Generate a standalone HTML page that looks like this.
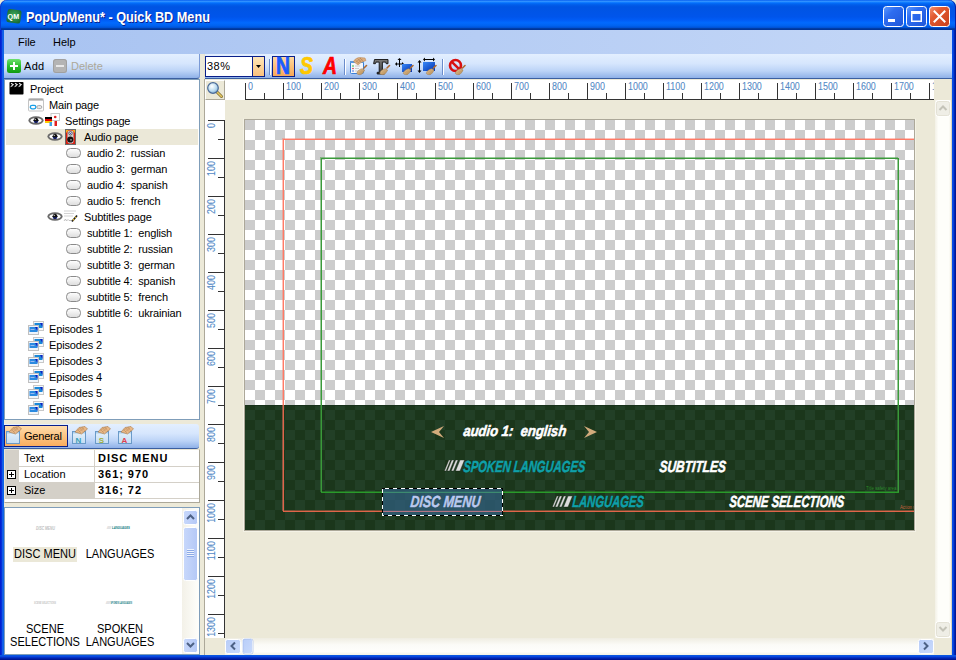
<!DOCTYPE html>
<html><head><meta charset="utf-8">
<style>
*{margin:0;padding:0;box-sizing:border-box}
html,body{width:956px;height:660px;overflow:hidden;background:#ece9d8}
body{position:relative;-webkit-font-smoothing:antialiased;font-family:"Liberation Sans",sans-serif;font-size:11px;color:#000}
.a{position:absolute}
.t{position:absolute;white-space:pre;line-height:16px}
.tr{letter-spacing:-0.15px}
.th{font-size:12px;width:100px;margin-left:-50px;text-align:center;transform:scaleX(0.92);transform-origin:50% 0}
.mi{font-weight:bold;font-style:italic;transform-origin:0 12px;-webkit-text-stroke:0.6px currentColor;text-shadow:0 0 1px rgba(0,10,0,0.9)}
/* window frame */
#title{left:0;top:0;width:956px;height:30px;border-radius:7px 7px 0 0;box-shadow:inset 1px 0 0 #0a3ad0,inset -1px 0 0 #0020a8;
background:linear-gradient(to bottom,#0058ee 0%,#3593ff 4%,#288eff 6%,#127dff 8%,#036ffc 10%,#0262ee 14%,#0057e5 20%,#0054e3 24%,#0055eb 56%,#005bf5 66%,#026afe 76%,#0062ef 86%,#0052d6 92%,#0040ab 94%,#003092 100%)}
#lb{left:0;top:30px;width:4px;height:630px;background:linear-gradient(to right,#0019cf,#0831d9 40%,#166aee 70%,#0a5fe0)}
#rb{left:952px;top:30px;width:4px;height:630px;background:linear-gradient(to right,#0050ee,#0a48e0 30%,#0028b8 60%,#001088)}
#bb{left:0;top:655px;width:956px;height:5px;background:linear-gradient(to bottom,#0a5fe0,#0a48e0 30%,#0028b8 60%,#001088)}
#menu{left:4px;top:30px;width:948px;height:24px;background:linear-gradient(to right,#a8c3f1,#c4d7f7)}
.tb{background:linear-gradient(to bottom,#e3efff 0%,#d6e6fd 40%,#bcd4f7 70%,#8fb1e8 100%);border-bottom:1px solid #3b5fa0}
</style></head><body>
<div id="title" class="a"></div>
<div id="lb" class="a"></div>
<div id="rb" class="a"></div>
<div id="bb" class="a"></div>
<div id="menu" class="a"></div>
<div class="t" style="left:18px;top:34px">File</div>
<div class="t" style="left:53px;top:34px">Help</div>
<!-- title text -->
<div class="t" style="left:26px;top:9px;font-size:14px;font-weight:bold;color:#fff;text-shadow:1px 1px 0 #0a1f8e;transform:scaleX(0.906);transform-origin:0 0">PopUpMenu* - Quick BD Menu</div>


<!-- title buttons -->
<svg class="a" style="left:883px;top:6px" width="67" height="21">
<defs>
<linearGradient id="bb1" x1="0" y1="0" x2="1" y2="1"><stop offset="0" stop-color="#5d9bff"/><stop offset="0.35" stop-color="#2e6df0"/><stop offset="1" stop-color="#1f56d8"/></linearGradient>
<linearGradient id="rb1" x1="0" y1="0" x2="1" y2="1"><stop offset="0" stop-color="#f59373"/><stop offset="0.35" stop-color="#e25a30"/><stop offset="1" stop-color="#c9401c"/></linearGradient>
</defs>
<rect x="0.5" y="0.5" width="20" height="20" rx="3" fill="url(#bb1)" stroke="#fff"/>
<rect x="5" y="13" width="7" height="3" fill="#fff"/>
<rect x="23.5" y="0.5" width="20" height="20" rx="3" fill="url(#bb1)" stroke="#fff"/>
<path d="M28 5h11v11h-11z M29.5 8v6.5h8v-6.5z" fill="#fff" fill-rule="evenodd"/>
<rect x="46.5" y="0.5" width="20" height="20" rx="3" fill="url(#rb1)" stroke="#fff"/>
<path d="M51.5 5.5 L61.5 15.5 M61.5 5.5 L51.5 15.5" stroke="#fff" stroke-width="2" stroke-linecap="square"/>
</svg>
<!-- QM icon -->
<svg class="a" style="left:5px;top:8px" width="18" height="17">
<defs><radialGradient id="qmg" cx="0.5" cy="0.45" r="0.6"><stop offset="0" stop-color="#3fae5e"/><stop offset="1" stop-color="#1a6b34"/></radialGradient></defs>
<rect x="2" y="1.5" width="14" height="13.5" rx="2.5" fill="url(#qmg)" transform="rotate(8 9 8)"/>
<text x="2.6" y="11.2" font-family="Liberation Sans" font-weight="bold" font-size="7.2" fill="#fff">QM</text>
</svg>
<!-- left toolbar -->
<div class="a tb" style="left:4px;top:54px;width:196px;height:25px;border-right:1px solid #7a9ad6;border-radius:0 0 3px 0"></div>
<!-- right toolbar -->
<div class="a tb" style="left:204px;top:54px;width:748px;height:25px"></div>


<!-- left toolbar content -->
<svg class="a" style="left:7px;top:59px" width="14" height="14">
<defs><linearGradient id="gpl" x1="0" y1="0" x2="0" y2="1"><stop offset="0" stop-color="#6fe06f"/><stop offset="0.5" stop-color="#2cbf2c"/><stop offset="1" stop-color="#129a12"/></linearGradient></defs>
<rect x="0" y="0" width="14" height="14" rx="2.5" fill="url(#gpl)"/>
<path d="M6 3h2v3h3v2h-3v3h-2v-3h-3v-2h3z" fill="#fff"/>
</svg>
<div class="t" style="left:24px;top:58px;letter-spacing:0.3px">Add</div>
<svg class="a" style="left:53px;top:59px" width="14" height="14">
<rect x="0" y="0" width="14" height="14" rx="2.5" fill="#b4b4b4"/>
<rect x="0.5" y="0.5" width="13" height="13" rx="2.5" fill="none" stroke="#a0a0a0"/>
<rect x="3" y="6" width="8" height="2" fill="#e8e8e8"/>
</svg>
<div class="t" style="left:71px;top:58px;color:#aca899">Delete</div>

<!-- right toolbar content -->
<div class="a" style="left:204px;top:54px;width:1px;height:25px;background:#e8e4d0"></div>
<div class="a" style="left:205px;top:56px;width:60px;height:21px;border:1px solid #0a1f8a;background:#fff"></div>
<div class="a" style="left:252px;top:57px;width:12px;height:19px;border-left:1px solid #0a1f8a;background:linear-gradient(#fee6b8,#fbc27e)"></div>
<svg class="a" style="left:256px;top:65px" width="6" height="4"><path d="M0 0h5l-2.5 3z" fill="#000"/></svg>
<div class="t" style="left:207px;top:58px;letter-spacing:0.5px">38%</div>
<div class="a" style="left:269px;top:59px;width:1px;height:16px;background:#6a8ccb;box-shadow:1px 0 0 #fff"></div>
<div class="a" style="left:272px;top:56px;width:23px;height:21px;border:1px solid #0a1f8a;background:linear-gradient(#ffd9a0,#f8a855)"></div>
<div class="t" style="left:276px;top:55px;font-size:22px;line-height:22px;font-weight:bold;color:#1a5cff;transform:scale(0.88,1.06);transform-origin:0 0;-webkit-text-stroke:0.7px #1a5cff">N</div>
<div class="t" style="left:300px;top:55px;font-size:22px;line-height:22px;font-weight:bold;font-style:italic;color:#ffc800;transform:scale(0.88,1.06);transform-origin:0 0;-webkit-text-stroke:0.7px #ffc800">S</div>
<div class="t" style="left:323px;top:55px;font-size:22px;line-height:22px;font-weight:bold;font-style:italic;color:#ff0000;transform:scale(0.88,1.06);transform-origin:0 0;-webkit-text-stroke:0.7px #ff0000">A</div>
<div class="a" style="left:344px;top:59px;width:1px;height:16px;background:#6a8ccb;box-shadow:1px 0 0 #fff"></div>
<div class="a" style="left:442px;top:59px;width:1px;height:16px;background:#6a8ccb;box-shadow:1px 0 0 #fff"></div>
<svg class="a" style="left:348px;top:56px" width="120" height="20">
<defs>
<linearGradient id="brush" x1="0" y1="0" x2="1" y2="1"><stop offset="0" stop-color="#e8c89a"/><stop offset="1" stop-color="#b08850"/></linearGradient>
<g id="br"><path d="M7.5 1.5 L10 -1" stroke="#b06a30" stroke-width="1.6" stroke-linecap="round"/><path d="M5.5 2.5 l2.5 1 l-0.5 1z" fill="#9aa0a8"/><path d="M5.8 2.2 C3.5 2.5 0.5 4.5 0.3 7 C1.5 8.5 4 8.3 5 7.8 C6.5 6.5 7.8 4.5 8 3.5 z" fill="url(#brush)" stroke="#a07848" stroke-width="0.5"/><path d="M2 6.5l3-2.5 M3 7.5l3-3" stroke="#c89860" stroke-width="0.4"/></g>
</defs>
<!-- properties icon -->
<rect x="2.5" y="5.5" width="13" height="12" rx="1" fill="#f4f6fa" stroke="#3a80d8"/>
<rect x="2" y="5" width="14" height="2" fill="#5a9ae0"/>
<circle cx="5" cy="10" r="0.8" fill="#20b020"/><circle cx="5" cy="12.5" r="0.8" fill="#d03040"/><circle cx="5" cy="15" r="0.8" fill="#3060e0"/>
<path d="M7 10h5 M7 12.5h4 M7 15h4" stroke="#c0c0c0" stroke-width="0.8"/>
<path d="M5.5 5.5 C7 3 9 1.5 12 1.5 L17 2 L18 4.5 L13 6.5 L10 9 z" fill="#dcae80" stroke="#b88550" stroke-width="0.5"/>
<path d="M8 6l5-4 M9.5 7.5l5-4.5 M7 3.5l4 4 M9.5 2.5l3.5 3.5 M12 2l3 3" stroke="#a8784a" stroke-width="0.45"/>
<use href="#br" x="8.5" y="10.5"/>
<!-- T icon -->
<defs><linearGradient id="tg" x1="0" y1="0" x2="0" y2="1"><stop offset="0" stop-color="#7a7a7a"/><stop offset="1" stop-color="#3a3a3a"/></linearGradient></defs><path d="M26.5 3.5h13.5v4.2h-1.8l-0.6-1.6h-3.2v10.2h2v1.7h-7.2v-1.7h2v-10.2h-3.2l-0.6 1.6h-1.8z" fill="url(#tg)" stroke="#111" stroke-width="0.9" stroke-linejoin="round"/>
<use href="#br" x="31.5" y="10.5"/>
<!-- move icon -->
<path d="M48 8h7 M51.5 3v8" stroke="#000" stroke-width="1"/>
<path d="M47 8l2-2v4z M56 8l-2-2v4z M51.5 2l-2 2h4z" fill="#000"/>
<defs><linearGradient id="bq" x1="0" y1="0" x2="1" y2="1"><stop offset="0" stop-color="#3a8af8"/><stop offset="1" stop-color="#0030b0"/></linearGradient></defs><rect x="54" y="8" width="10" height="8" fill="url(#bq)"/>
<use href="#br" x="55" y="10.5"/>
<!-- size icon -->
<path d="M71.5 6v9 M76 3.5h10" stroke="#000" stroke-width="1"/>
<path d="M71.5 4l-2 2.5h4z M71.5 17l-2-2.5h4z M75 3.5l2-2v4z M87 3.5l-2-2v4z" fill="#000"/>
<rect x="75" y="6" width="12" height="9" fill="url(#bq)"/>
<use href="#br" x="78" y="10.5"/>
<!-- no icon -->
<circle cx="107.5" cy="9.5" r="5.5" fill="none" stroke="#d81010" stroke-width="2.6"/>
<path d="M103.8 5.8 l7.4 7.4" stroke="#d81010" stroke-width="2.4"/>
<use href="#br" x="107" y="10.5"/>
</svg>
<!-- tree -->
<div class="a" style="left:4px;top:79px;width:196px;height:341px;background:#fff;border:1px solid #7f9db9"></div>

<!-- tree content -->
<div class="a" style="left:6px;top:129px;width:192px;height:16px;background:#ebe8d8"></div>
<svg width="0" height="0" style="position:absolute"><defs>
<linearGradient id="btng" x1="0" y1="0" x2="0" y2="1"><stop offset="0" stop-color="#fff"/><stop offset="1" stop-color="#dcdcdc"/></linearGradient>
<g id="eye"><ellipse cx="8" cy="4.5" rx="7.6" ry="4.2" fill="#6a6a6a"/><ellipse cx="8" cy="4.5" rx="5.6" ry="2.6" fill="#fff"/><path d="M5.3 4.5 L8 1.5 L10.7 4.5 L8 7.3z" fill="#111"/><circle cx="8" cy="4.5" r="2.4" fill="#111"/><circle cx="6.9" cy="6" r="0.7" fill="#1830d0"/><circle cx="9.1" cy="6" r="0.7" fill="#1830d0"/><circle cx="7.2" cy="3.3" r="0.6" fill="#fff"/></g>
<g id="btni"><rect x="0.5" y="0.5" width="14" height="9" rx="4" fill="url(#btng)" stroke="#8a8a8a"/></g>
<g id="epi"><rect x="5.5" y="0.5" width="10" height="9" fill="#f4f8fc" stroke="#c8c8c8"/><rect x="6.5" y="2" width="8" height="5" fill="#1a88d8"/><path d="M12 2h2.5v4z" fill="#1020c0"/><rect x="0.5" y="4.5" width="10" height="9" fill="#eef4fa" stroke="#c0c0c0"/><rect x="1.5" y="6" width="8" height="5" fill="#2a8ae0"/><path d="M7 6h2.5v4z" fill="#1020c0"/><rect x="2.5" y="8" width="4" height="1" fill="#9ab8f0"/></g>
</defs></svg>
<div class="t tr" style="left:30px;top:81px">Project</div>
<svg class="a" style="left:9px;top:82px" width="16" height="13"><rect x="0.5" y="0" width="14" height="12.5" rx="0.8" fill="#000"/><path d="M2 1.2l2.2 1.3l-1.6 1.3 M6 1.2l2.2 1.3l-1.6 1.3 M10 1.2l2.2 1.3l-1.6 1.3" stroke="#fff" stroke-width="1.1" fill="none" opacity="0.9"/><path d="M1.5 4.7l2-0.8 M5.5 4.7l2-0.8 M9.5 4.7l2-0.8" stroke="#fff" stroke-width="1" opacity="0.8"/></svg>
<div class="t tr" style="left:49px;top:97px">Main page</div>
<svg class="a" style="left:28px;top:98px" width="16" height="14"><rect x="0.5" y="0.5" width="15" height="12.5" rx="1" fill="#fdfdfd" stroke="#c4c4c4"/><rect x="1" y="1" width="14" height="1.6" fill="#a8a8a8"/><rect x="2.3" y="7.3" width="5.6" height="3.6" rx="1.8" fill="#fff" stroke="#18a0e8" stroke-width="1.3"/><rect x="8.8" y="7.6" width="5" height="3" rx="1.5" fill="#e8e8e8" stroke="#a8a8a8" stroke-width="1"/></svg>
<div class="t tr" style="left:65px;top:113px">Settings page</div>
<svg class="a" style="left:28px;top:116px" width="16" height="10"><use href="#eye"/></svg>
<svg class="a" style="left:44px;top:112px" width="17" height="15"><rect x="7" y="1.5" width="8.5" height="7" fill="#fff" stroke="#c8c8c8"/><circle cx="11.2" cy="5" r="1.3" fill="#e02020"/><rect x="1" y="5" width="7" height="2" fill="#000"/><rect x="1" y="7" width="7" height="2" fill="#e00000"/><rect x="1" y="9" width="7" height="2" fill="#ffcc00"/><rect x="5.5" y="10" width="2.5" height="4" fill="#40a0e0"/><rect x="8" y="10" width="2.5" height="4" fill="#fff"/><rect x="10.5" y="9" width="2.5" height="5" fill="#e02020"/></svg>
<div class="t tr" style="left:84px;top:129px">Audio page</div>
<svg class="a" style="left:47px;top:132px" width="16" height="10"><use href="#eye"/></svg>
<svg class="a" style="left:65px;top:129px" width="11" height="16"><rect x="0.5" y="0.5" width="10" height="15" fill="#d82010" stroke="#6a6a6a"/><path d="M1 1h3l-3 3z M10 1h-3l3 3z" fill="#f0b020"/><rect x="2.5" y="1.5" width="6" height="13" rx="2.5" fill="#d0d0d0"/><circle cx="5.5" cy="4.3" r="1.7" fill="#f0f0f8" stroke="#222" stroke-width="0.7"/><circle cx="5.5" cy="4.3" r="0.6" fill="#2030c0"/><circle cx="5.3" cy="10.5" r="3.1" fill="#111"/><circle cx="6" cy="10.8" r="0.9" fill="#999"/></svg>
<div class="t tr" style="left:87px;top:145px">audio 2:  russian</div>
<svg class="a" style="left:66px;top:148px" width="16" height="11"><use href="#btni"/></svg>
<div class="t tr" style="left:87px;top:161px">audio 3:  german</div>
<svg class="a" style="left:66px;top:164px" width="16" height="11"><use href="#btni"/></svg>
<div class="t tr" style="left:87px;top:177px">audio 4:  spanish</div>
<svg class="a" style="left:66px;top:180px" width="16" height="11"><use href="#btni"/></svg>
<div class="t tr" style="left:87px;top:193px">audio 5:  french</div>
<svg class="a" style="left:66px;top:196px" width="16" height="11"><use href="#btni"/></svg>
<div class="t tr" style="left:84px;top:209px">Subtitles page</div>
<svg class="a" style="left:47px;top:212px" width="16" height="10"><use href="#eye"/></svg>
<svg class="a" style="left:63px;top:209px" width="16" height="16"><path d="M1 2h12 M1 4.5h10 M1 7h9" stroke="#c8c8c8" stroke-width="0.8"/><path d="M1 12l1.5-2l1 2l1.5-1.5l1 1h3" stroke="#aaa" stroke-width="0.7" fill="none"/><path d="M9 12.5l5-6" stroke="#222" stroke-width="1.8"/><path d="M10 11.3l1-1.2 M12 8.9l0.8-1" stroke="#f0c020" stroke-width="1.2"/></svg>
<div class="t tr" style="left:87px;top:225px">subtitle 1:  english</div>
<svg class="a" style="left:66px;top:228px" width="16" height="11"><use href="#btni"/></svg>
<div class="t tr" style="left:87px;top:241px">subtitle 2:  russian</div>
<svg class="a" style="left:66px;top:244px" width="16" height="11"><use href="#btni"/></svg>
<div class="t tr" style="left:87px;top:257px">subtitle 3:  german</div>
<svg class="a" style="left:66px;top:260px" width="16" height="11"><use href="#btni"/></svg>
<div class="t tr" style="left:87px;top:273px">subtitle 4:  spanish</div>
<svg class="a" style="left:66px;top:276px" width="16" height="11"><use href="#btni"/></svg>
<div class="t tr" style="left:87px;top:289px">subtitle 5:  french</div>
<svg class="a" style="left:66px;top:292px" width="16" height="11"><use href="#btni"/></svg>
<div class="t tr" style="left:87px;top:305px">subtitle 6:  ukrainian</div>
<svg class="a" style="left:66px;top:308px" width="16" height="11"><use href="#btni"/></svg>
<div class="t tr" style="left:49px;top:321px">Episodes 1</div>
<svg class="a" style="left:28px;top:321px" width="17" height="15"><use href="#epi"/></svg>
<div class="t tr" style="left:49px;top:337px">Episodes 2</div>
<svg class="a" style="left:28px;top:337px" width="17" height="15"><use href="#epi"/></svg>
<div class="t tr" style="left:49px;top:353px">Episodes 3</div>
<svg class="a" style="left:28px;top:353px" width="17" height="15"><use href="#epi"/></svg>
<div class="t tr" style="left:49px;top:369px">Episodes 4</div>
<svg class="a" style="left:28px;top:369px" width="17" height="15"><use href="#epi"/></svg>
<div class="t tr" style="left:49px;top:385px">Episodes 5</div>
<svg class="a" style="left:28px;top:385px" width="17" height="15"><use href="#epi"/></svg>
<div class="t tr" style="left:49px;top:401px">Episodes 6</div>
<svg class="a" style="left:28px;top:401px" width="17" height="15"><use href="#epi"/></svg>
<!-- tab bar -->
<div class="a tb" style="left:4px;top:424px;width:195px;height:25px;border-radius:0 3px 3px 0"></div>
<div class="a" style="left:4px;top:425px;width:64px;height:22px;border:1px solid #0a1f8a;background:linear-gradient(#ffdcaa,#f9ad5e)"></div>
<svg class="a" style="left:5px;top:426px" width="135" height="20">
<defs><linearGradient id="tabg" x1="0" y1="0" x2="0" y2="1"><stop offset="0" stop-color="#e6f2fc"/><stop offset="1" stop-color="#c4dcf2"/></linearGradient><g id="tabi"><rect x="1.5" y="5.5" width="13" height="12" fill="url(#tabg)" stroke="#6a9ac8"/><rect x="2" y="6" width="12" height="1.5" fill="#a8cdee"/><path d="M4 6 l4 -4.5 l6 -1 l2.5 2.5 l-6 5 z" fill="#e8b888" stroke="#a87848" stroke-width="0.6"/><path d="M7 4l3 3 M9 2.5l3 3 M11 1.8l3 3 M8 6l5-4 M6 4.5l6-3.5" stroke="#b88858" stroke-width="0.5"/></g></defs>
<use href="#tabi"/>
<use href="#tabi" x="66"/><text x="70.5" y="16.5" font-family="Liberation Sans" font-size="8" font-weight="bold" fill="#3aa0b8">N</text>
<use href="#tabi" x="89"/><text x="93.8" y="16.5" font-family="Liberation Sans" font-size="8" font-weight="bold" fill="#a0b040">S</text>
<use href="#tabi" x="112"/><text x="116.5" y="16.5" font-family="Liberation Sans" font-size="8" font-weight="bold" fill="#e04050">A</text>
</svg>
<div class="t" style="left:24px;top:428px;letter-spacing:-0.2px">General</div>

<!-- property grid -->
<div class="a" style="left:4px;top:449px;width:196px;height:54px;background:#fff;border:1px solid #aca899;border-top-color:#e8e4d4;border-left-color:#e8e4d4"></div>
<div class="a" style="left:5px;top:450px;width:14px;height:49px;background:#d4d0c8"></div>
<div class="a" style="left:19px;top:483px;width:75px;height:15px;background:#d4d0c8"></div>
<div class="a" style="left:19px;top:466px;width:180px;height:1px;background:#d4d0c8"></div>
<div class="a" style="left:19px;top:482px;width:180px;height:1px;background:#d4d0c8"></div>
<div class="a" style="left:5px;top:498px;width:194px;height:1px;background:#d4d0c8"></div>
<div class="a" style="left:94px;top:450px;width:1px;height:48px;background:#d4d0c8"></div>
<svg class="a" style="left:7px;top:470px" width="10" height="26" shape-rendering="crispEdges"><rect x="0.5" y="0.5" width="8" height="8" fill="#fff" stroke="#000"/><path d="M2 4.5h5 M4.5 2v5" stroke="#000"/><rect x="0.5" y="16.5" width="8" height="8" fill="#fff" stroke="#000"/><path d="M2 20.5h5 M4.5 18v5" stroke="#000"/></svg>
<div class="t" style="left:24px;top:450px">Text</div>
<div class="t" style="left:24px;top:466px">Location</div>
<div class="t" style="left:24px;top:482px">Size</div>
<div class="t" style="left:98px;top:450px;font-weight:bold;letter-spacing:0.95px">DISC MENU</div>
<div class="t" style="left:98px;top:466px;font-weight:bold;letter-spacing:0.95px">361; 970</div>
<div class="t" style="left:98px;top:482px;font-weight:bold;letter-spacing:0.95px">316; 72</div>

<!-- thumbnails -->
<div class="a" style="left:4px;top:507px;width:196px;height:148px;background:#fff;border:1px solid #7f9db9"></div>
<div class="a" style="left:182px;top:508px;width:17px;height:146px;background:linear-gradient(to right,#f3f1e8,#fefefb)"></div>
<svg class="a" style="left:182px;top:509px" width="17" height="145">
<defs><linearGradient id="sbg" x1="0" y1="0" x2="1" y2="0"><stop offset="0" stop-color="#c8d8fb"/><stop offset="1" stop-color="#b4c8f6"/></linearGradient></defs>
<rect x="1.5" y="1.5" width="14" height="14" rx="2" fill="url(#sbg)" stroke="#fff"/>
<path d="M5 10l3.5-3.5l3.5 3.5" stroke="#4d6185" stroke-width="2" fill="none"/>
<rect x="1.5" y="18.5" width="14" height="53" rx="2" fill="url(#sbg)" stroke="#fff"/>
<g shape-rendering="crispEdges"><path d="M5 40.5h7 M5 42.5h7 M5 44.5h7 M5 46.5h7" stroke="#eef3fd" stroke-width="1"/>
<path d="M5 41.5h7 M5 43.5h7 M5 45.5h7 M5 47.5h7" stroke="#8caae6" stroke-width="1"/></g>
<rect x="1.5" y="129.5" width="14" height="14" rx="2" fill="url(#sbg)" stroke="#fff"/>
<path d="M5 134l3.5 3.5l3.5-3.5" stroke="#4d6185" stroke-width="2" fill="none"/>
</svg>
<svg class="a" style="left:0px;top:520px" width="180" height="90">
<g font-family="Liberation Sans" font-weight="bold" font-style="italic">
<text x="36" y="9.5" fill="#c0c0c0" font-size="4.5" textLength="19" lengthAdjust="spacingAndGlyphs">DISC MENU</text>
<text x="107" y="8.5" fill="#c4c4c4" font-size="3.6" textLength="4" lengthAdjust="spacingAndGlyphs">////</text>
<text x="112" y="8.8" fill="#0e7a80" font-size="4.3" textLength="18" lengthAdjust="spacingAndGlyphs">LANGUAGES</text>
<text x="34" y="83.5" fill="#c4c4c4" font-size="3.6" textLength="22" lengthAdjust="spacingAndGlyphs">SCENE SELECTIONS</text>
<text x="106" y="83.5" fill="#c4c4c4" font-size="3.6" textLength="4" lengthAdjust="spacingAndGlyphs">////</text>
<text x="110.5" y="83.8" fill="#0e7a80" font-size="3.8" textLength="21.5" lengthAdjust="spacingAndGlyphs">SPOKEN LANGUAGES</text>
</g></svg>
<div class="a" style="left:13px;top:547px;width:64px;height:15px;background:#ebe8d8"></div>
<div class="t th" style="left:45px;top:546px">DISC MENU</div>
<div class="t th" style="left:120px;top:546px">LANGUAGES</div>
<div class="t th" style="left:45px;top:623px;line-height:13px">SCENE</div>
<div class="t th" style="left:45px;top:636px;line-height:13px">SELECTIONS</div>
<div class="t th" style="left:120px;top:623px;line-height:13px">SPOKEN</div>
<div class="t th" style="left:120px;top:636px;line-height:13px">LANGUAGES</div>

<!-- splitter -->
<div class="a" style="left:204px;top:79px;width:1px;height:576px;background:#aca899"></div>

<!-- rulers -->
<svg class="a" style="left:225px;top:80px" width="709" height="20" shape-rendering="crispEdges"><rect width="709" height="20" fill="#fff"/>
<rect x="20" y="19" width="689" height="1" fill="#333"/>
<rect x="20" y="3" width="1" height="16" fill="#333"/>
<rect x="39" y="13" width="1" height="6" fill="#333"/>
<rect x="58" y="3" width="1" height="16" fill="#333"/>
<rect x="77" y="13" width="1" height="6" fill="#333"/>
<rect x="96" y="3" width="1" height="16" fill="#333"/>
<rect x="115" y="13" width="1" height="6" fill="#333"/>
<rect x="134" y="3" width="1" height="16" fill="#333"/>
<rect x="153" y="13" width="1" height="6" fill="#333"/>
<rect x="172" y="3" width="1" height="16" fill="#333"/>
<rect x="191" y="13" width="1" height="6" fill="#333"/>
<rect x="210" y="3" width="1" height="16" fill="#333"/>
<rect x="229" y="13" width="1" height="6" fill="#333"/>
<rect x="248" y="3" width="1" height="16" fill="#333"/>
<rect x="267" y="13" width="1" height="6" fill="#333"/>
<rect x="286" y="3" width="1" height="16" fill="#333"/>
<rect x="305" y="13" width="1" height="6" fill="#333"/>
<rect x="324" y="3" width="1" height="16" fill="#333"/>
<rect x="343" y="13" width="1" height="6" fill="#333"/>
<rect x="362" y="3" width="1" height="16" fill="#333"/>
<rect x="381" y="13" width="1" height="6" fill="#333"/>
<rect x="400" y="3" width="1" height="16" fill="#333"/>
<rect x="419" y="13" width="1" height="6" fill="#333"/>
<rect x="438" y="3" width="1" height="16" fill="#333"/>
<rect x="457" y="13" width="1" height="6" fill="#333"/>
<rect x="476" y="3" width="1" height="16" fill="#333"/>
<rect x="495" y="13" width="1" height="6" fill="#333"/>
<rect x="514" y="3" width="1" height="16" fill="#333"/>
<rect x="533" y="13" width="1" height="6" fill="#333"/>
<rect x="552" y="3" width="1" height="16" fill="#333"/>
<rect x="571" y="13" width="1" height="6" fill="#333"/>
<rect x="590" y="3" width="1" height="16" fill="#333"/>
<rect x="609" y="13" width="1" height="6" fill="#333"/>
<rect x="628" y="3" width="1" height="16" fill="#333"/>
<rect x="647" y="13" width="1" height="6" fill="#333"/>
<rect x="666" y="3" width="1" height="16" fill="#333"/>
<rect x="685" y="13" width="1" height="6" fill="#333"/>
<rect x="704" y="3" width="1" height="16" fill="#333"/>
<g font-family="Liberation Sans" font-size="10.5" fill="#5289c6" stroke="#5289c6" stroke-width="0.08" shape-rendering="auto">
<text x="23" y="9.6" transform="translate(23 0) scale(0.85 1) translate(-23 0)">0</text>
<text x="61" y="9.6" transform="translate(61 0) scale(0.85 1) translate(-61 0)">100</text>
<text x="99" y="9.6" transform="translate(99 0) scale(0.85 1) translate(-99 0)">200</text>
<text x="137" y="9.6" transform="translate(137 0) scale(0.85 1) translate(-137 0)">300</text>
<text x="175" y="9.6" transform="translate(175 0) scale(0.85 1) translate(-175 0)">400</text>
<text x="213" y="9.6" transform="translate(213 0) scale(0.85 1) translate(-213 0)">500</text>
<text x="251" y="9.6" transform="translate(251 0) scale(0.85 1) translate(-251 0)">600</text>
<text x="289" y="9.6" transform="translate(289 0) scale(0.85 1) translate(-289 0)">700</text>
<text x="327" y="9.6" transform="translate(327 0) scale(0.85 1) translate(-327 0)">800</text>
<text x="365" y="9.6" transform="translate(365 0) scale(0.85 1) translate(-365 0)">900</text>
<text x="403" y="9.6" transform="translate(403 0) scale(0.85 1) translate(-403 0)">1000</text>
<text x="441" y="9.6" transform="translate(441 0) scale(0.85 1) translate(-441 0)">1100</text>
<text x="479" y="9.6" transform="translate(479 0) scale(0.85 1) translate(-479 0)">1200</text>
<text x="517" y="9.6" transform="translate(517 0) scale(0.85 1) translate(-517 0)">1300</text>
<text x="555" y="9.6" transform="translate(555 0) scale(0.85 1) translate(-555 0)">1400</text>
<text x="593" y="9.6" transform="translate(593 0) scale(0.85 1) translate(-593 0)">1500</text>
<text x="631" y="9.6" transform="translate(631 0) scale(0.85 1) translate(-631 0)">1600</text>
<text x="669" y="9.6" transform="translate(669 0) scale(0.85 1) translate(-669 0)">1700</text>
<text x="707" y="9.6" transform="translate(707 0) scale(0.85 1) translate(-707 0)">1800</text>
</g></svg>
<svg class="a" style="left:205px;top:100px" width="20" height="538" shape-rendering="crispEdges"><rect width="20" height="538" fill="#fff"/>
<rect x="19" y="20" width="1" height="518" fill="#333"/>
<rect x="3" y="20" width="16" height="1" fill="#333"/>
<rect x="13" y="39" width="6" height="1" fill="#333"/>
<rect x="3" y="58" width="16" height="1" fill="#333"/>
<rect x="13" y="77" width="6" height="1" fill="#333"/>
<rect x="3" y="96" width="16" height="1" fill="#333"/>
<rect x="13" y="115" width="6" height="1" fill="#333"/>
<rect x="3" y="134" width="16" height="1" fill="#333"/>
<rect x="13" y="153" width="6" height="1" fill="#333"/>
<rect x="3" y="172" width="16" height="1" fill="#333"/>
<rect x="13" y="191" width="6" height="1" fill="#333"/>
<rect x="3" y="210" width="16" height="1" fill="#333"/>
<rect x="13" y="229" width="6" height="1" fill="#333"/>
<rect x="3" y="248" width="16" height="1" fill="#333"/>
<rect x="13" y="267" width="6" height="1" fill="#333"/>
<rect x="3" y="286" width="16" height="1" fill="#333"/>
<rect x="13" y="305" width="6" height="1" fill="#333"/>
<rect x="3" y="324" width="16" height="1" fill="#333"/>
<rect x="13" y="343" width="6" height="1" fill="#333"/>
<rect x="3" y="362" width="16" height="1" fill="#333"/>
<rect x="13" y="381" width="6" height="1" fill="#333"/>
<rect x="3" y="400" width="16" height="1" fill="#333"/>
<rect x="13" y="419" width="6" height="1" fill="#333"/>
<rect x="3" y="438" width="16" height="1" fill="#333"/>
<rect x="13" y="457" width="6" height="1" fill="#333"/>
<rect x="3" y="476" width="16" height="1" fill="#333"/>
<rect x="13" y="495" width="6" height="1" fill="#333"/>
<rect x="3" y="514" width="16" height="1" fill="#333"/>
<rect x="13" y="533" width="6" height="1" fill="#333"/>
<g font-family="Liberation Sans" font-size="10.5" fill="#5289c6" stroke="#5289c6" stroke-width="0.08" shape-rendering="auto">
<g transform="translate(9.5 23) rotate(-90) scale(0.85 1)"><text x="0" y="0" text-anchor="end">0</text></g>
<g transform="translate(9.5 61) rotate(-90) scale(0.85 1)"><text x="0" y="0" text-anchor="end">100</text></g>
<g transform="translate(9.5 99) rotate(-90) scale(0.85 1)"><text x="0" y="0" text-anchor="end">200</text></g>
<g transform="translate(9.5 137) rotate(-90) scale(0.85 1)"><text x="0" y="0" text-anchor="end">300</text></g>
<g transform="translate(9.5 175) rotate(-90) scale(0.85 1)"><text x="0" y="0" text-anchor="end">400</text></g>
<g transform="translate(9.5 213) rotate(-90) scale(0.85 1)"><text x="0" y="0" text-anchor="end">500</text></g>
<g transform="translate(9.5 251) rotate(-90) scale(0.85 1)"><text x="0" y="0" text-anchor="end">600</text></g>
<g transform="translate(9.5 289) rotate(-90) scale(0.85 1)"><text x="0" y="0" text-anchor="end">700</text></g>
<g transform="translate(9.5 327) rotate(-90) scale(0.85 1)"><text x="0" y="0" text-anchor="end">800</text></g>
<g transform="translate(9.5 365) rotate(-90) scale(0.85 1)"><text x="0" y="0" text-anchor="end">900</text></g>
<g transform="translate(9.5 403) rotate(-90) scale(0.85 1)"><text x="0" y="0" text-anchor="end">1000</text></g>
<g transform="translate(9.5 441) rotate(-90) scale(0.85 1)"><text x="0" y="0" text-anchor="end">1100</text></g>
<g transform="translate(9.5 479) rotate(-90) scale(0.85 1)"><text x="0" y="0" text-anchor="end">1200</text></g>
<g transform="translate(9.5 517) rotate(-90) scale(0.85 1)"><text x="0" y="0" text-anchor="end">1300</text></g>
<g transform="translate(9.5 555) rotate(-90) scale(0.85 1)"><text x="0" y="0" text-anchor="end">1400</text></g>
</g></svg>


<!-- magnifier button -->
<div class="a" style="left:205px;top:80px;width:20px;height:20px;background:#ece9d8;border:1px solid #fff;border-right-color:#aca899;border-bottom-color:#aca899"></div>
<svg class="a" style="left:206px;top:81px" width="18" height="18">
<defs><radialGradient id="mg" cx="0.4" cy="0.35" r="0.7"><stop offset="0" stop-color="#ffffff"/><stop offset="0.6" stop-color="#bcdcf0"/><stop offset="1" stop-color="#7aa8d0"/></radialGradient></defs>
<path d="M10.5 10.5 L15.5 15.5" stroke="#7a6a30" stroke-width="3" stroke-linecap="round"/>
<path d="M10.5 10.5 L15.5 15.5" stroke="#e8c860" stroke-width="1.6" stroke-linecap="round"/>
<circle cx="7" cy="7" r="5.3" fill="url(#mg)" stroke="#4a6a98" stroke-width="1.2"/>
</svg>
<!-- vertical scrollbar -->
<div class="a" style="left:935px;top:100px;width:17px;height:538px;background:linear-gradient(to right,#f3f1e6,#fefefa 20%,#fefefa 80%,#f1efe4)"></div>
<svg class="a" style="left:935px;top:100px" width="17" height="538">
<rect x="0.5" y="0.5" width="15" height="16" rx="2" fill="#fff"/>
<rect x="1.5" y="1.5" width="13" height="14" rx="2" fill="#efeee6" stroke="#e4e2d6"/>
<path d="M4.5 10l3.5-3.5l3.5 3.5" stroke="#c4c3b8" stroke-width="2" fill="none"/>
<rect x="0.5" y="521.5" width="15" height="16" rx="2" fill="#fff"/>
<rect x="1.5" y="522.5" width="13" height="14" rx="2" fill="#efeee6" stroke="#e4e2d6"/>
<path d="M4.5 527l3.5 3.5l3.5-3.5" stroke="#c4c3b8" stroke-width="2" fill="none"/>
</svg>
<!-- horizontal scrollbar -->
<div class="a" style="left:225px;top:638px;width:710px;height:17px;background:linear-gradient(to bottom,#efede2,#fbfbf7 40%,#fefefc 80%,#f2f0e6)"></div>
<svg class="a" style="left:225px;top:638px" width="710" height="17">
<defs><linearGradient id="hsg" x1="0" y1="0" x2="1" y2="1"><stop offset="0" stop-color="#b8cdf8"/><stop offset="1" stop-color="#c9dafc"/></linearGradient></defs>
<rect x="0.5" y="1.5" width="15" height="14" rx="2" fill="url(#hsg)" stroke="#fff"/>
<path d="M10 4.5l-3.5 3.5l3.5 3.5" stroke="#4d6185" stroke-width="2" fill="none"/>
<rect x="17.5" y="0.5" width="10" height="15" rx="2" fill="url(#hsg)" stroke="#fff"/>
<rect x="18" y="1" width="10" height="15" rx="2" fill="none" stroke="#9fb6e6" stroke-width="0.6"/>
<rect x="693.5" y="1.5" width="15" height="14" rx="2" fill="url(#hsg)" stroke="#fff"/>
<path d="M699 4.5l3.5 3.5l-3.5 3.5" stroke="#4d6185" stroke-width="2" fill="none"/>
</svg>
<div class="a" style="left:934px;top:638px;width:18px;height:17px;background:#ece9d8"></div>
<div class="a" style="left:951px;top:79px;width:1px;height:576px;background:#d8d4c0"></div>
<!-- canvas -->
<div class="a" style="left:243px;top:118px;width:673px;height:414px;border:1px solid #f4f2e6;border-top-color:#ece9d8;border-left-color:#f4f2e6"></div>
<div class="a" style="left:244px;top:119px;width:671px;height:412px;border:1px solid #aca899"></div>
<svg class="a" style="left:245px;top:120px" width="669" height="410" shape-rendering="crispEdges">
<defs>
<pattern id="ck" width="20" height="20" patternUnits="userSpaceOnUse"><rect width="20" height="20" fill="#fff"/><rect width="10" height="10" fill="#cccccc"/><rect x="10" y="10" width="10" height="10" fill="#cccccc"/></pattern>
<pattern id="gk" width="20" height="20" patternUnits="userSpaceOnUse" x="0" y="0"><rect width="20" height="20" fill="#223f26"/><rect width="10" height="10" fill="#1b361b"/><rect x="10" y="10" width="10" height="10" fill="#1b361b"/></pattern>
</defs>
<rect width="669" height="410" fill="url(#ck)"/>
<rect y="285" width="669" height="125" fill="url(#gk)"/>
<rect y="285" width="669" height="1" fill="#17301a"/>
<rect x="37" y="18" width="1" height="373" fill="#ff7a66" opacity="0.45"/>
<rect x="38" y="18" width="631" height="1" fill="#ff7a66" opacity="0.45"/>
<rect x="75" y="37" width="1" height="335" fill="#3a9a3a" opacity="0.5"/>
<rect x="76" y="37" width="577" height="1" fill="#3a9a3a" opacity="0.5"/>
<rect x="652" y="38" width="1" height="334" fill="#3a9a3a" opacity="0.5"/>
<rect x="76" y="371" width="577" height="1" fill="#2a9a2a" opacity="0.5"/>
<rect x="38" y="390" width="631" height="1" fill="#e0654a" opacity="0.45"/>
<rect x="38" y="19" width="1" height="372" fill="#ff7a66"/>
<rect x="38" y="19" width="631" height="1" fill="#ff7a66"/>
<rect x="38" y="285" width="1" height="106" fill="#e0654a"/>
<rect x="38" y="391" width="631" height="1" fill="#e0654a"/>
<rect x="76" y="38" width="1" height="334" fill="#3a9a3a"/>
<rect x="76" y="38" width="578" height="1" fill="#3a9a3a"/>
<rect x="653" y="38" width="1" height="335" fill="#3a9a3a"/>
<rect x="76" y="372" width="578" height="1" fill="#2a9a2a"/>
</svg>


<!-- menu items on canvas -->
<svg class="a" style="left:382px;top:488px" width="121" height="28" shape-rendering="crispEdges">
<rect x="1" y="1" width="119" height="26" fill="rgba(48,96,130,0.72)"/>
<rect x="1" y="4" width="119" height="1" fill="#3d8a70"/>
<rect x="1" y="23" width="119" height="1" fill="#b47484"/>
<rect x="0.5" y="0.5" width="120" height="27" fill="none" stroke="#000" stroke-width="1"/>
<rect x="0.5" y="0.5" width="120" height="27" fill="none" stroke="#fff" stroke-width="1" stroke-dasharray="4 4" stroke-dashoffset="-2"/>
</svg>
<div class="t mi" id="m_audio" style="left:463px;top:423px;font-size:15px;transform:scaleX(0.87) skewX(-7deg);color:#fff">audio 1:  english</div>
<div class="t mi" id="m_spoken" style="left:463px;top:459px;font-size:16px;transform:scaleX(0.70) skewX(-7deg);color:#10a0a8">SPOKEN LANGUAGES</div>
<div class="t mi" id="m_sub" style="left:659px;top:459px;font-size:16px;transform:scaleX(0.75) skewX(-7deg);color:#fff">SUBTITLES</div>
<div class="t mi" id="m_disc" style="left:410px;top:494px;font-size:16px;transform:scaleX(0.78) skewX(-7deg);color:#b9c9ef">DISC MENU</div>
<div class="t mi" id="m_lang" style="left:572px;top:494px;font-size:16px;transform:scaleX(0.70) skewX(-7deg);color:#10a0a8">LANGUAGES</div>
<div class="t mi" id="m_scene" style="left:729px;top:494px;font-size:16px;transform:scaleX(0.71) skewX(-7deg);color:#fff">SCENE SELECTIONS</div>
<svg class="a" style="left:431px;top:426px" width="14" height="12"><path d="M0 6 L13 0 L8 6 L13 12 Z" fill="#d2ab7c"/></svg>
<svg class="a" style="left:584px;top:426px" width="14" height="12"><path d="M13 6 L0 0 L5 6 L0 12 Z" fill="#d2ab7c"/></svg>
<svg class="a" style="left:444px;top:460px" width="22" height="12"><g fill="#dcdcdc" stroke="#0c1c0c" stroke-width="0.4"><path d="M0.3 11h1.8l4.5-11h-1.8z"/><path d="M3.2 11h2.4l4.5-11h-2.4z"/><path d="M7.2 11h2.4l4.5-11h-2.4z"/><path d="M11.5 11h4.5l4.5-11h-4.5z"/></g></svg>
<svg class="a" style="left:552px;top:496px" width="22" height="12"><g fill="#dcdcdc" stroke="#0c1c0c" stroke-width="0.4"><path d="M0.3 11h1.8l4.5-11h-1.8z"/><path d="M3.2 11h2.4l4.5-11h-2.4z"/><path d="M7.2 11h2.4l4.5-11h-2.4z"/><path d="M11.5 11h4.5l4.5-11h-4.5z"/></g></svg>
<div class="t" style="left:866px;top:484px;font-size:5.5px;line-height:8px;color:#2a8a2a;transform:scaleX(0.78);transform-origin:0 0">Title safety area</div>
<div class="a" style="left:245px;top:120px;width:669px;height:410px;overflow:hidden"><div class="t" style="left:655px;top:383px;font-size:5.5px;line-height:8px;color:#c8603a;transform:scaleX(0.78);transform-origin:0 0">Action safe area</div></div>
</body></html>
